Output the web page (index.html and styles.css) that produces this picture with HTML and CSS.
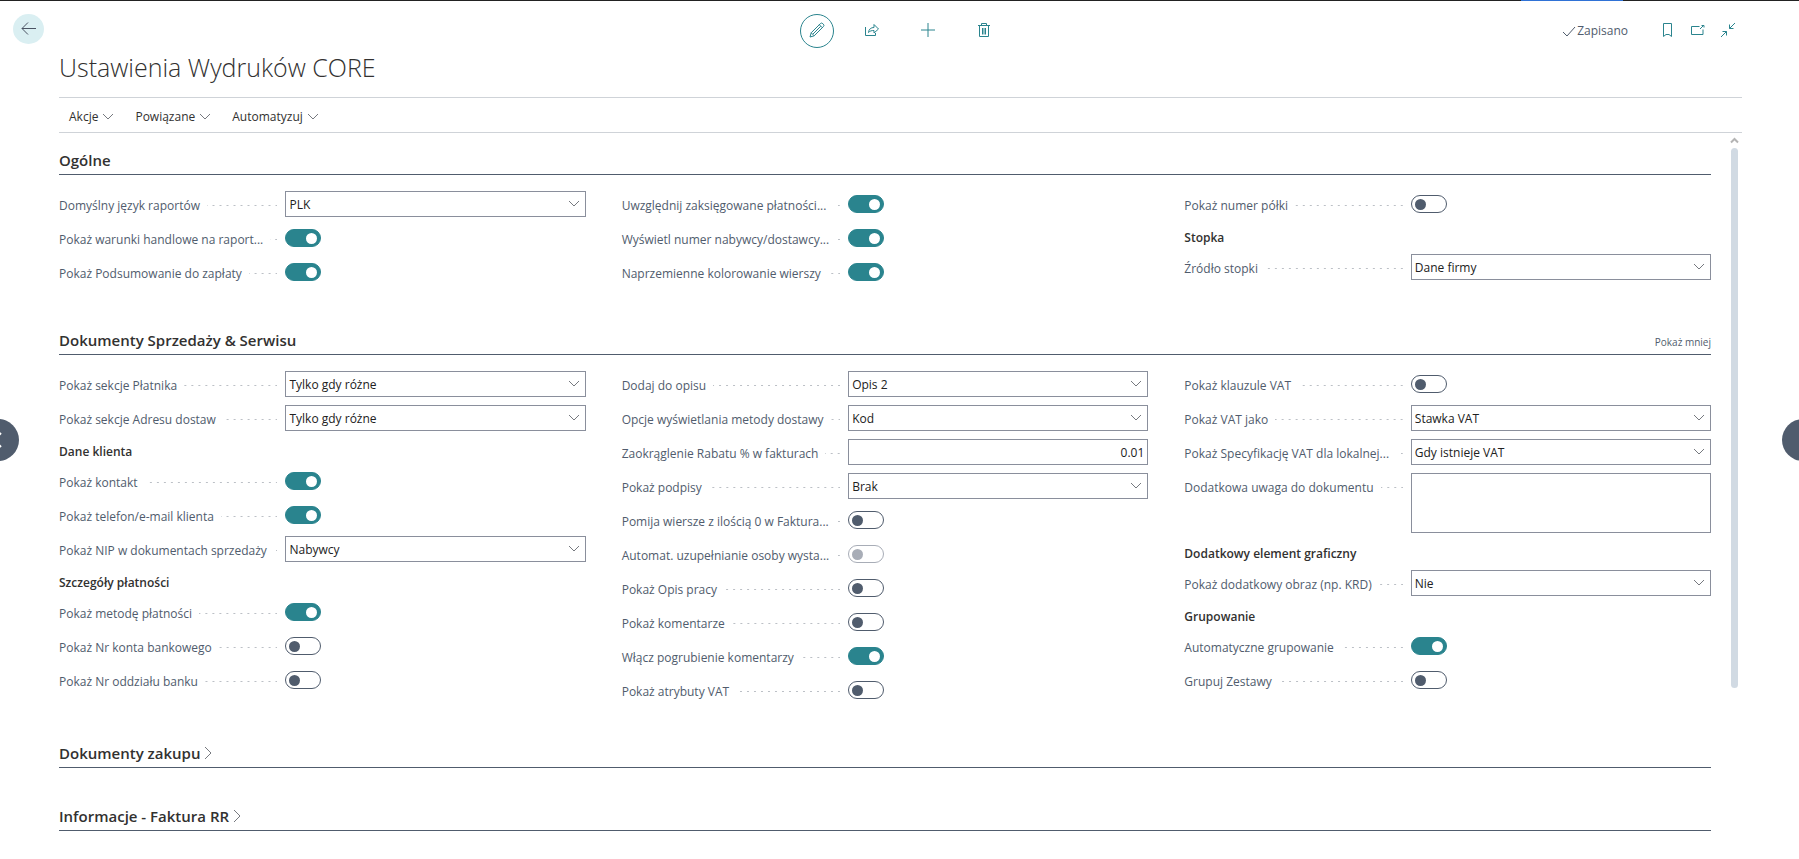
FILE: index.html
```html
<!DOCTYPE html>
<html lang="pl">
<head>
<meta charset="utf-8">
<title>Ustawienia Wydruków CORE</title>
<link rel="stylesheet" href="styles.css">
</head>
<body>
<svg class="defs" aria-hidden="true">
  <symbol id="chev" viewBox="0 0 12 8"><path d="M1 1l5 5 5-5" fill="none" stroke="currentColor"/></symbol>
  <symbol id="chev-right" viewBox="0 0 9 14"><path d="M1 1l6 6-6 6" fill="none" stroke="currentColor"/></symbol>
</svg>
<div class="strip"><span class="strip-tab"></span></div>

<header class="topbar">
  <div class="topbar-left">
    <button class="back" aria-label="Wstecz"><svg width="16" height="14" viewBox="0 0 16 14"><path d="M15 6.500H1M7 .5L1 6.500l6 6" fill="none" stroke="currentColor"/></svg></button>
  </div>
  <nav class="tools">
    <button class="tool edit" aria-label="Edytuj"><svg width="16" height="16" viewBox="0 0 16 16"><path d="M1 15l1.200-4.200L11.300 1.700a1.800 1.800 0 0 1 2.600 0l.4.4a1.800 1.800 0 0 1 0 2.600L5.200 13.800zM2.200 10.800l3 3M10.300 2.700l3 3M4 12l7.700-7.700" fill="none" stroke="currentColor"/></svg></button>
    <button class="tool" aria-label="Udostępnij"><svg width="16" height="16" viewBox="0 0 16 16"><path d="M1.500 5v8.500h10V11M4.500 10.500c.3-3.500 2.500-5 5.500-5V2.500L14.500 7 10 11V8.500c-2.500 0-4 .4-5.500 2z" fill="none" stroke="currentColor"/></svg></button>
    <button class="tool" aria-label="Nowy"><svg width="16" height="16" viewBox="0 0 16 16"><path d="M8 1v14M1 8h14" fill="none" stroke="currentColor"/></svg></button>
    <button class="tool" aria-label="Usuń"><svg width="16" height="16" viewBox="0 0 16 16"><path d="M2 3.500h12M5.500 3.500v-2h5v2M3.500 3.500v11h9v-11M6.500 6v6.500M8 6v6.500M9.500 6v6.500" fill="none" stroke="currentColor"/></svg></button>
  </nav>
  <div class="status">
    <span class="saved"><svg width="14" height="11" viewBox="0 0 14 11"><path d="M1 6l4 4 8-9" fill="none" stroke="currentColor"/></svg>Zapisano</span>
    <button class="mini" aria-label="Zakładka"><svg width="16" height="16" viewBox="0 0 16 16"><path d="M3.500 1.500h8v13l-2.500-2h-3l-2.500 2z" fill="none" stroke="currentColor"/></svg></button>
    <button class="mini" aria-label="Otwórz w nowym oknie"><svg width="16" height="16" viewBox="0 0 16 16"><path d="M9.500 4.500h-8v8h11.500V7.500M10 7l4-4M11.500 3.500h2.500v2" fill="none" stroke="currentColor"/></svg></button>
    <button class="mini" aria-label="Zwiń"><svg width="16" height="16" viewBox="0 0 16 16"><path d="M15 1L9.500 6.500M9.500 2.500v4h4M1 15l5.500-5.500M2.500 9.500h4v4" fill="none" stroke="currentColor"/></svg></button>
  </div>
</header>

<main class="page">
  <h1>Ustawienia Wydruków CORE</h1>
  <nav class="menu">
    <button>Akcje<svg class="chev"><use href="#chev"/></svg></button>
    <button>Powiązane<svg class="chev"><use href="#chev"/></svg></button>
    <button>Automatyzuj<svg class="chev"><use href="#chev"/></svg></button>
  </nav>

  <div class="body">
    <div class="sections">
      <section class="open general">
        <div class="head"><h2>Ogólne</h2></div>
        <div class="grid">
          <div class="col">
            <div class="row"><label for="f1"><span>Domyślny język raportów</span></label><div class="pick"><select id="f1"><option>PLK</option></select><svg class="chev"><use href="#chev"/></svg></div></div>
            <div class="row"><label for="f2"><span>Pokaż warunki handlowe na raport...</span></label><input type="checkbox" role="switch" id="f2" checked></div>
            <div class="row"><label for="f3"><span>Pokaż Podsumowanie do zapłaty</span></label><input type="checkbox" role="switch" id="f3" checked></div>
          </div>
          <div class="col">
            <div class="row"><label for="f4"><span>Uwzględnij zaksięgowane płatności...</span></label><input type="checkbox" role="switch" id="f4" checked></div>
            <div class="row"><label for="f5"><span>Wyświetl numer nabywcy/dostawcy...</span></label><input type="checkbox" role="switch" id="f5" checked></div>
            <div class="row"><label for="f6"><span>Naprzemienne kolorowanie wierszy</span></label><input type="checkbox" role="switch" id="f6" checked></div>
          </div>
          <div class="col">
            <div class="row"><label for="f7"><span>Pokaż numer półki</span></label><input type="checkbox" role="switch" id="f7"></div>
            <h3>Stopka</h3>
            <div class="row"><label for="f8"><span>Źródło stopki</span></label><div class="pick"><select id="f8"><option>Dane firmy</option></select><svg class="chev"><use href="#chev"/></svg></div></div>
          </div>
        </div>
      </section>

      <section class="open">
        <div class="head"><h2>Dokumenty Sprzedaży &amp; Serwisu</h2><button class="less">Pokaż mniej</button></div>
        <div class="grid">
          <div class="col">
            <div class="row"><label for="g1"><span>Pokaż sekcje Płatnika</span></label><div class="pick"><select id="g1"><option>Tylko gdy różne</option></select><svg class="chev"><use href="#chev"/></svg></div></div>
            <div class="row"><label for="g2"><span>Pokaż sekcje Adresu dostaw</span></label><div class="pick"><select id="g2"><option>Tylko gdy różne</option></select><svg class="chev"><use href="#chev"/></svg></div></div>
            <h3>Dane klienta</h3>
            <div class="row"><label for="g3"><span>Pokaż kontakt</span></label><input type="checkbox" role="switch" id="g3" checked></div>
            <div class="row"><label for="g4"><span>Pokaż telefon/e-mail klienta</span></label><input type="checkbox" role="switch" id="g4" checked></div>
            <div class="row"><label for="g5"><span>Pokaż NIP w dokumentach sprzedaży</span></label><div class="pick"><select id="g5"><option>Nabywcy</option></select><svg class="chev"><use href="#chev"/></svg></div></div>
            <h3>Szczegóły płatności</h3>
            <div class="row"><label for="g6"><span>Pokaż metodę płatności</span></label><input type="checkbox" role="switch" id="g6" checked></div>
            <div class="row"><label for="g7"><span>Pokaż Nr konta bankowego</span></label><input type="checkbox" role="switch" id="g7"></div>
            <div class="row"><label for="g8"><span>Pokaż Nr oddziału banku</span></label><input type="checkbox" role="switch" id="g8"></div>
          </div>
          <div class="col">
            <div class="row"><label for="h1"><span>Dodaj do opisu</span></label><div class="pick"><select id="h1"><option>Opis 2</option></select><svg class="chev"><use href="#chev"/></svg></div></div>
            <div class="row"><label for="h2"><span>Opcje wyświetlania metody dostawy</span></label><div class="pick"><select id="h2"><option>Kod</option></select><svg class="chev"><use href="#chev"/></svg></div></div>
            <div class="row"><label for="h3"><span>Zaokrąglenie Rabatu % w fakturach</span></label><input type="text" class="number" id="h3" value="0.01"></div>
            <div class="row"><label for="h4"><span>Pokaż podpisy</span></label><div class="pick"><select id="h4"><option>Brak</option></select><svg class="chev"><use href="#chev"/></svg></div></div>
            <div class="row"><label for="h5"><span>Pomija wiersze z ilością 0 w Faktura...</span></label><input type="checkbox" role="switch" id="h5"></div>
            <div class="row"><label for="h6"><span>Automat. uzupełnianie osoby wysta...</span></label><input type="checkbox" role="switch" id="h6" disabled></div>
            <div class="row"><label for="h7"><span>Pokaż Opis pracy</span></label><input type="checkbox" role="switch" id="h7"></div>
            <div class="row"><label for="h8"><span>Pokaż komentarze</span></label><input type="checkbox" role="switch" id="h8"></div>
            <div class="row"><label for="h9"><span>Włącz pogrubienie komentarzy</span></label><input type="checkbox" role="switch" id="h9" checked></div>
            <div class="row"><label for="h10"><span>Pokaż atrybuty VAT</span></label><input type="checkbox" role="switch" id="h10"></div>
          </div>
          <div class="col">
            <div class="row"><label for="k1"><span>Pokaż klauzule VAT</span></label><input type="checkbox" role="switch" id="k1"></div>
            <div class="row"><label for="k2"><span>Pokaż VAT jako</span></label><div class="pick"><select id="k2"><option>Stawka VAT</option></select><svg class="chev"><use href="#chev"/></svg></div></div>
            <div class="row"><label for="k3"><span>Pokaż Specyfikację VAT dla lokalnej...</span></label><div class="pick"><select id="k3"><option>Gdy istnieje VAT</option></select><svg class="chev"><use href="#chev"/></svg></div></div>
            <div class="row"><label for="k4"><span>Dodatkowa uwaga do dokumentu</span></label><textarea id="k4"></textarea></div>
            <h3>Dodatkowy element graficzny</h3>
            <div class="row"><label for="k5"><span>Pokaż dodatkowy obraz (np. KRD)</span></label><div class="pick"><select id="k5"><option>Nie</option></select><svg class="chev"><use href="#chev"/></svg></div></div>
            <h3>Grupowanie</h3>
            <div class="row"><label for="k6"><span>Automatyczne grupowanie</span></label><input type="checkbox" role="switch" id="k6" checked></div>
            <div class="row"><label for="k7"><span>Grupuj Zestawy</span></label><input type="checkbox" role="switch" id="k7"></div>
          </div>
        </div>
      </section>

      <section>
        <div class="head"><h2><button class="expand">Dokumenty zakupu<svg class="chev-right"><use href="#chev-right"/></svg></button></h2></div>
      </section>
      <section>
        <div class="head"><h2><button class="expand">Informacje - Faktura RR<svg class="chev-right"><use href="#chev-right"/></svg></button></h2></div>
      </section>
    </div>
    <div class="scroll" aria-hidden="true">
      <svg width="9" height="7" viewBox="0 0 9 7"><path d="M1 5.500l3.500-3.500 3.500 3.500" fill="none" stroke="#b4b4b4" stroke-width="2"/></svg>
      <div class="track"><div class="thumb"></div></div>
    </div>
  </div>
</main>
<button class="side prev" aria-label="Poprzedni"><svg width="10" height="16" viewBox="0 0 10 16"><path d="M8 1L1 8l7 7" fill="none" stroke="#fff" stroke-width="2"/></svg></button>
<button class="side next" aria-label="Następny"></button>
</body>
</html>
```
FILE: styles.css
```css
* { box-sizing: border-box; }
html, body { height: 100%; }
body {
  margin: 0;
  display: flex;
  flex-direction: column;
  position: relative;
  overflow: hidden;
  background: #fff;
  color: #505c6d;
  font: 12px/16px "Open Sans", "Noto Sans", sans-serif;
}
button, select, input, textarea { font: inherit; color: inherit; }
button { border: 0; background: none; padding: 0; }
svg { display: block; flex: none; }
.defs { position: absolute; width: 0; height: 0; }

.strip { height: 1px; flex: none; background: #222; display: flex; justify-content: flex-end; padding-right: 176px; }
.strip-tab { width: 102px; background: #2f72d6; }

.topbar {
  height: 48px;
  flex: none;
  display: grid;
  grid-template-columns: 1fr auto 1fr;
  padding: 13px 63px 0 13px;
  align-items: start;
}
.back {
  width: 31px;
  height: 30px;
  border-radius: 50%;
  background: #daeff2;
  color: #4a5363;
  display: grid;
  place-items: center;
}
.tools { display: flex; gap: 20px; align-items: center; color: #2a848e; padding-left: 52px; }
.tool { width: 36px; height: 34px; padding-bottom: 2px; display: grid; place-items: center; }
.tool.edit { width: 34px; border: 1px solid #2a848e; border-radius: 50%; }
.status { display: flex; justify-content: flex-end; align-items: center; height: 34px; gap: 14px; color: #2a848e; }
.mini { padding-bottom: 2px; }
.saved { display: flex; align-items: center; gap: 1px; color: #505c6d; margin-right: 18px; }

.page { flex: 1; min-height: 0; display: flex; flex-direction: column; padding: 0 57px 0 59px; }
h1 {
  margin: 0;
  height: 48px;
  font-size: 25px;
  line-height: 37px;
  font-weight: 300;
  color: #323130;
}
.menu {
  display: flex;
  gap: 21px;
  height: 36px;
  flex: none;
  align-items: center;
  padding: 4px 10px 0;
  border-top: 1px solid #cfd3d8;
  border-bottom: 1px solid #cfd3d8;
  color: #323130;
}
.menu button { display: flex; align-items: center; gap: 4px; }
.menu .chev, .pick .chev { color: #76797f; }
.chev { width: 12px; height: 8px; }

.body { flex: 1; min-height: 0; display: flex; }
.sections { flex: 1; padding-top: 12px; }
section { margin-bottom: 33px; }
section.open { margin-bottom: 27px; }
.head {
  height: 30px;
  display: flex;
  justify-content: space-between;
  align-items: center;
  padding-top: 1px;
  border-bottom: 1px solid #505c6d;
}
h2 { margin: 0; font-size: 15px; line-height: 20px; font-weight: 600; color: #323130; }
.expand { display: flex; align-items: center; gap: 4px; }
.chev-right { width: 9px; height: 14px; color: #76797f; }
.less { font-size: 10px; padding-top: 4px; }

.grid { display: grid; grid-template-columns: repeat(3, 1fr); gap: 36px; padding-top: 16px; }
.general .grid { padding-bottom: 5px; }
h3 { margin: 0; height: 29px; font-size: 12px; line-height: 25px; font-weight: 600; color: #323130; }
.row { display: flex; align-items: flex-start; padding-bottom: 8px; min-height: 34px; }
label { width: 43%; flex: none; height: 26px; display: flex; align-items: center; padding-right: 8px; padding-top: 3px; white-space: nowrap; }
label::after {
  content: "";
  flex: 1;
  height: 1px;
  min-width: 2px;
  margin-left: 7px;
  background: linear-gradient(to left, #bcc0c6 2px, transparent 2px) right / 7px 1px repeat-x;
}
.pick { flex: 1; position: relative; }
.pick .chev { position: absolute; right: 6px; top: 9px; pointer-events: none; }
select, input.number, textarea {
  display: block;
  width: 100%;
  height: 26px;
  margin: 0;
  padding: 1px 3px 0;
  border: 1px solid #8a8f9c;
  border-radius: 0;
  background: #fff;
  color: #212121;
  appearance: none;
}
input.number { flex: 1; width: auto; min-width: 0; text-align: right; }
textarea { flex: 1; width: auto; height: 60px; resize: none; }
input[type="checkbox"] {
  appearance: none;
  width: 36px;
  height: 18px;
  margin: 4px 0 0;
  padding: 0 3px;
  border: 1px solid #505c6d;
  border-radius: 9px;
  display: flex;
  align-items: center;
}
input[type="checkbox"]::before { content: ""; width: 11px; height: 11px; border-radius: 50%; background: #505c6d; }
input[type="checkbox"]:checked { background: #2a848e; border-color: #2a848e; justify-content: flex-end; }
input[type="checkbox"]:checked::before { background: #fff; }
input[type="checkbox"]:disabled { border-color: #a8adb7; }
input[type="checkbox"]:disabled::before { background: #a8adb7; }

.scroll { width: 31px; display: flex; flex-direction: column; align-items: center; padding: 4px 0 0 15px; }
.track { flex: 1; width: 7px; margin-top: 4px; }
.thumb { height: 76%; border-radius: 4px; background: #d1dae3; }

.side { position: absolute; top: 419px; width: 42px; height: 42px; border-radius: 50%; background: #505c6d; display: grid; place-items: center; }
.prev { left: -23px; }
.next { right: -25px; }
```
